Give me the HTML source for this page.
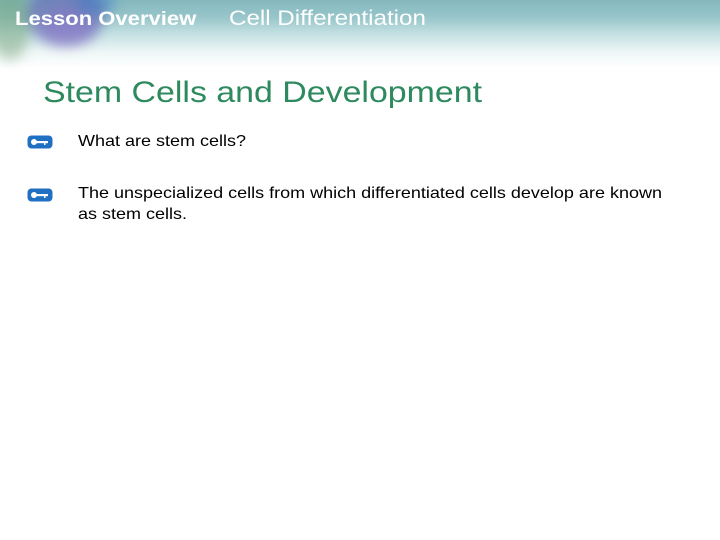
<!DOCTYPE html>
<html><head><style>
body{margin:0;width:720px;height:540px;background:#fff;position:relative;overflow:hidden;font-family:"Liberation Sans",Arial,sans-serif}
.hdr{position:absolute;left:0;top:0;width:720px;height:80px;background:linear-gradient(180deg,#84b8be 0%,#98c6ca 22%,#c4e0e2 42%,#eef6f6 65%,#fff 85%)}
.blob{position:absolute;border-radius:50%;filter:blur(6px)}
.t{position:absolute;color:#fff;white-space:nowrap;transform-origin:left top}
.key{position:absolute;left:27px;width:26px;height:14px}
.txt{position:absolute;left:78px;font-size:16px;color:#000;line-height:21px;white-space:nowrap;transform:scaleX(1.125);transform-origin:left top}
</style></head><body>
<div class="hdr"></div>
<div class="blob" style="left:25px;top:-15px;width:80px;height:60px;background:rgba(90,80,180,.5)"></div>
<div class="blob" style="left:-10px;top:-10px;width:40px;height:70px;background:rgba(110,160,110,.45)"></div>
<div class="blob" style="left:40px;top:5px;width:55px;height:40px;background:rgba(140,110,200,.4)"></div>
<div class="blob" style="left:75px;top:-10px;width:40px;height:25px;background:rgba(60,120,200,.45)"></div>
<div class="t" style="left:15px;top:9px;font-size:19px;font-weight:bold;transform:scaleX(1.16)">Lesson Overview</div>
<div class="t" style="left:229px;top:7px;font-size:21px;transform:scaleX(1.15)">Cell Differentiation</div>
<div class="t" style="left:43px;top:76px;font-size:30px;color:#2e8a5e;transform:scaleX(1.13)">Stem Cells and Development</div>
<svg class="key" style="top:135px" viewBox="0 0 26 14"><rect x="0.5" y="0.5" width="25" height="13" rx="4" fill="#1f6fc2"/><circle cx="7" cy="7" r="3" fill="#fff"/><rect x="7" y="6" width="14" height="2.2" fill="#fff"/><rect x="17" y="7" width="1.5" height="3" fill="#fff"/></svg>
<svg class="key" style="top:188px" viewBox="0 0 26 14"><rect x="0.5" y="0.5" width="25" height="13" rx="4" fill="#1f6fc2"/><circle cx="7" cy="7" r="3" fill="#fff"/><rect x="7" y="6" width="14" height="2.2" fill="#fff"/><rect x="17" y="7" width="1.5" height="3" fill="#fff"/></svg>
<div class="txt" style="top:131px">What are stem cells?</div>
<div class="txt" style="top:183px">The unspecialized cells from which differentiated cells develop are known<br>as stem cells.</div>
</body></html>
